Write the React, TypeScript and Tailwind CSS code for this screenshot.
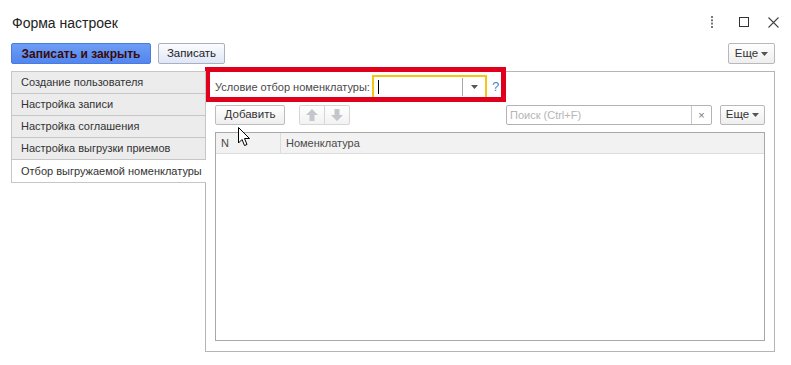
import React from "react";

function ArrowIcon({ up }: { up: boolean }) {
  return (
    <svg width="14" height="14" viewBox="0 0 14 14" className={up ? "" : "rotate-180"}>
      <polygon points="7,1 13,7 9.5,7 9.5,13 4.5,13 4.5,7 1,7" fill="#c3c6cb" />
    </svg>
  );
}

function Caret() {
  return (
    <svg width="7" height="4" viewBox="0 0 7 4">
      <polygon points="0,0 7,0 3.5,4" fill="#555" />
    </svg>
  );
}

export default function App() {
  const tabs = [
    "Создание пользователя",
    "Настройка записи",
    "Настройка соглашения",
    "Настройка выгрузки приемов",
  ];
  return (
    <div className="relative w-[791px] h-[365px] overflow-hidden bg-white font-['Liberation_Sans',Arial,sans-serif] text-[11px] text-[#333]">
      {/* Title bar */}
      <div className="flex h-[43px] items-start justify-between pl-[12px] pr-[12px] pt-[15px]">
        <div className="text-[14px] leading-[17px] text-[#222]">Форма настроек</div>
        <div className="flex items-center pt-[1px]">
          <svg width="4" height="12" viewBox="0 0 4 12" className="mr-[25px]">
            <rect x="1" y="0" width="2" height="2" fill="#777" />
            <rect x="1" y="3.3" width="2" height="2" fill="#777" />
            <rect x="1" y="6.6" width="2" height="2" fill="#777" />
            <rect x="1" y="10" width="2" height="2" fill="#777" />
          </svg>
          <svg width="10" height="10" viewBox="0 0 10 10" className="mr-[19px]">
            <rect x="0.5" y="0.5" width="9" height="9" fill="none" stroke="#333" strokeWidth="1" />
          </svg>
          <svg width="11" height="11" viewBox="0 0 11 11">
            <path d="M0.5 0.5 L10.5 10.5 M10.5 0.5 L0.5 10.5" stroke="#444" strokeWidth="1.1" />
          </svg>
        </div>
      </div>

      {/* Toolbar */}
      <div className="flex h-[21px] items-stretch pl-[11px] pr-[16px]">
        <button className="w-[140px] rounded-[2px] border border-[#4b7be0] bg-gradient-to-b from-[#6d9df5] to-[#5386ee] text-[12px] font-bold text-[#3a0a0a]">
          Записать и закрыть
        </button>
        <button className="ml-[7px] w-[67px] rounded-[2px] border border-[#aab0be] bg-gradient-to-b from-[#fbfcff] to-[#dfe6f6] text-[11.5px] text-[#222]">
          Записать
        </button>
        <button className="ml-auto flex w-[47px] items-center justify-center gap-[3px] rounded-[2px] border border-[#b8b8b8] bg-gradient-to-b from-white to-[#eeeeee] text-[11.5px] text-[#333]">
          Еще <Caret />
        </button>
      </div>

      {/* Content */}
      <div className="mt-[7px] flex h-[281px] pl-[11px] pr-[16px]">
        <div className="relative z-10 flex w-[195px] flex-col">
          {tabs.map((t) => (
            <div
              key={t}
              className="flex h-[22px] items-center whitespace-nowrap border-l border-r border-t border-[#c6c6c6] bg-[#ececec] pl-[9px] text-[11px] text-[#333]"
            >
              {t}
            </div>
          ))}
          <div className="flex h-[24px] items-center whitespace-nowrap border-b border-l border-t border-[#c6c6c6] bg-white pl-[9px] text-[11px] text-[#333]">
            Отбор выгружаемой номенклатуры
          </div>
        </div>

        <div className="-ml-px flex flex-1 flex-col border border-[#b5b5b5] px-[9px] pb-[10px] pt-[3px]">
          {/* Form row */}
          <div className="flex h-[24px] items-center">
            <div className="w-[157px] whitespace-nowrap text-[11px] text-[#4a4a4a]">Условие отбор номенклатуры:</div>
            <div className="flex h-[24px] w-[115px] items-center border-2 border-[#f6c414] bg-white">
              <div className="ml-[4px] h-[14px] w-px bg-black" />
              <div className="ml-auto h-[18px] w-px bg-[#a8a8a8]" />
              <div className="flex w-[22px] items-center justify-center">
                <Caret />
              </div>
            </div>
            <div className="ml-[5px] text-[13px] text-[#3b8ad8]">?</div>
          </div>

          {/* Table toolbar */}
          <div className="mt-[6px] flex h-[20px] items-stretch">
            <button className="w-[70px] rounded-[2px] border border-[#bdbdbd] bg-gradient-to-b from-white to-[#eeeeee] text-[11.5px] text-[#333]">
              Добавить
            </button>
            <div className="ml-[14px] flex w-[51px] rounded-[2px] border border-[#d6d6d6] bg-gradient-to-b from-white to-[#f2f2f2]">
              <div className="flex flex-1 items-center justify-center border-r border-[#d6d6d6]">
                <ArrowIcon up />
              </div>
              <div className="flex flex-1 items-center justify-center">
                <ArrowIcon up={false} />
              </div>
            </div>
            <div className="ml-auto flex w-[206px] items-stretch rounded-[2px] border border-[#b3b3b3] bg-white">
              <div className="flex flex-1 items-center pl-[3px] text-[11px] text-[#b5b5b5]">Поиск (Ctrl+F)</div>
              <div className="flex w-[20px] items-center justify-center border-l border-[#c8c8c8] text-[11px] text-[#777]">
                ×
              </div>
            </div>
            <button className="ml-[8px] flex w-[45px] items-center justify-center gap-[3px] rounded-[2px] border border-[#b8b8b8] bg-gradient-to-b from-white to-[#eeeeee] text-[11.5px] text-[#333]">
              Еще <Caret />
            </button>
          </div>

          {/* Table */}
          <div className="mt-[7px] flex flex-1 flex-col border border-[#a8a8a8]">
            <div className="flex h-[21px] items-stretch border-b border-[#dcdcdc] bg-[#f2f2f2] text-[11px] text-[#4a4a4a]">
              <div className="flex w-[65px] items-center border-r border-[#dcdcdc] pl-[5px]">N</div>
              <div className="flex items-center pl-[5px]">Номенклатура</div>
            </div>
            <div className="flex-1 bg-white" />
          </div>
        </div>
      </div>

      {/* Red highlight */}
      <div className="pointer-events-none absolute left-[205px] top-[67px] h-[35px] w-[301px] border-[5px] border-[#e0001b]" />

      {/* Mouse cursor */}
      <svg className="pointer-events-none absolute left-[238px] top-[127px]" width="13" height="20" viewBox="0 0 13 20">
        <path d="M0.5 0.5 L0.5 16 L4 12.5 L6.5 18.5 L9 17.5 L6.5 11.5 L11.5 11.5 Z" fill="white" stroke="black" strokeWidth="1" strokeLinejoin="miter" />
      </svg>
    </div>
  );
}
